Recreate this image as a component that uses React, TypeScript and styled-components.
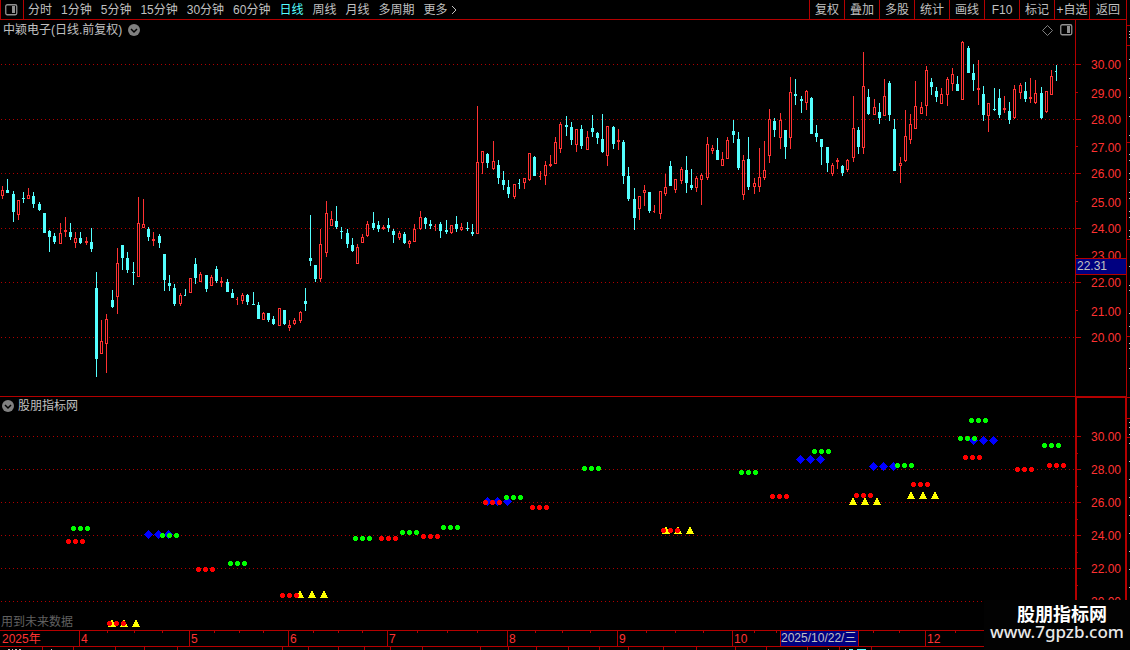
import React from "react";
import styled, { createGlobalStyle } from "styled-components";

const UI_FONT = '"Liberation Sans", "Noto Sans CJK SC", sans-serif';
const LINE = "#b40000";
const UP = "#ff3232";
const DOWN = "#54ffff";
const TEXT = "#c0c0c0";

const GlobalStyle = createGlobalStyle`
  * { box-sizing: border-box; }
  html, body { margin: 0; background: #000; }
  body { font-family: ${UI_FONT}; font-size: 12px; color: ${TEXT}; }
  svg { display: block; }
`;

const Page = styled.div`
  position: relative;
  display: flex;
  background: #000;
  overflow: hidden;
`;

const Main = styled.main`
  flex: 1;
  min-width: 0;
  display: flex;
  flex-direction: column;
`;

const Toolbar = styled.header`
  display: flex;
  justify-content: space-between;
  height: 20px;
  border-bottom: 1px solid ${LINE};
`;

const Group = styled.nav`
  display: flex;
`;

const ToolButton = styled.button`
  padding: 2px 0 0;
  border: 0;
  background: none;
  color: ${TEXT};
  font: 12px/17px ${UI_FONT};
  white-space: nowrap;
  cursor: pointer;
`;

const PanelToggle = styled(ToolButton)`
  width: 24px;
  margin-right: 4px;
  padding: 0 0 0 4px;
  border: solid ${LINE};
  border-width: 0 1px;
`;

const PeriodButton = styled(ToolButton)<{ $active?: boolean }>`
  margin-right: 9px;
  color: ${(p) => (p.$active ? DOWN : TEXT)};
`;

const MoreButton = styled(PeriodButton)`
  display: flex;
  align-items: center;
  gap: 3px;
`;

const ActionButton = styled(ToolButton)<{ $wide?: boolean }>`
  width: ${(p) => (p.$wide ? 37 : 35)}px;
  border-left: 1px solid ${LINE};
`;

const Pane = styled.section`
  display: flex;
`;

const PlotArea = styled.div<{ $divided?: boolean }>`
  position: relative;
  flex: 1;
  min-width: 0;
  border-top: ${(p) => (p.$divided ? `1px solid ${LINE}` : "0")};
`;

const Axis = styled.div<{ $selected?: boolean }>`
  flex: none;
  width: 51px;
  border: solid ${LINE};
  border-width: ${(p) => (p.$selected ? "2px 1px 0 2px" : "0 0 0 1px")};
`;

const Caption = styled.div<{ $main?: boolean }>`
  position: absolute;
  top: 0;
  left: ${(p) => (p.$main ? 3 : 2)}px;
  display: flex;
  align-items: center;
  gap: ${(p) => (p.$main ? 6 : 4)}px;
  height: ${(p) => (p.$main ? 20 : 18)}px;
  line-height: 18px;
`;

const CornerTools = styled.div`
  position: absolute;
  top: 4px;
  right: 2px;
  display: flex;
  gap: 7px;
`;

const IconButton = styled.button`
  display: block;
  padding: 0;
  border: 0;
  background: none;
  cursor: pointer;
`;

const Note = styled.div`
  position: absolute;
  left: 1px;
  bottom: 0;
  line-height: 16px;
  color: #606060;
`;

const TimeAxis = styled.footer`
  border-top: 1px solid ${LINE};
`;

const NextPane = styled.div`
  border-top: 1px solid ${LINE};
`;

const SideStrip = styled.aside`
  flex: none;
  width: 4px;
  border-left: 1px solid ${LINE};
`;

const Watermark = styled.div`
  position: absolute;
  right: 0;
  bottom: 0;
  width: 146px;
  height: 50px;
  padding-top: 3px;
  background: #020202;
  color: #fff;
  text-align: center;
`;

const WatermarkName = styled.div`
  padding-left: 10px;
  font: bold 18px/20px "Noto Sans CJK SC", sans-serif;
`;

const WatermarkSite = styled.div`
  font: 500 17px/18px "Noto Sans", sans-serif;
  color: #e8e8e8;
`;

/* x, high, body top, body bottom, low, direction (1 up, 0 down), narrow body */
type Candle = [number, number, number, number, number, number, number?];

const candles: Candle[] = [
  [2,186,190,196,199,1],[7,179,190,193,193,0],[13,191,194,212,222,0],[18,200,200,215,220,1],
  [23,192,198,199,203,0],[28,188,195,199,199,1],[33,192,196,204,208,0],[39,202,204,210,211,0],
  [44,213,213,233,233,0],[49,230,231,237,252,0],[54,233,236,242,244,0],[60,223,233,244,244,1],
  [65,217,230,232,237,1],[70,223,232,237,240,0],[75,232,238,243,248,1],[80,232,238,243,244,0],
  [86,237,241,243,245,1],[91,228,242,249,252,0],[96,272,288,359,377,0],[101,320,341,354,354,1],
  [106,314,319,344,373,1],[112,290,300,307,308,0],[117,248,263,297,314,1],[122,245,245,258,270,0],
  [127,252,258,270,273,0],[133,262,272,273,285,0],[138,197,223,277,277,1],[143,199,224,228,228,1],
  [148,227,229,237,241,0],[153,232,239,241,246,1],[159,234,236,243,248,0],[164,254,254,280,291,0],
  [169,275,283,286,291,0],[174,284,288,304,306,0],[180,293,295,304,306,1],[185,289,295,296,296,0,1],
  [190,278,278,293,293,1],[195,258,264,278,284,0],[200,272,274,282,282,1],[206,275,275,289,292,0],
  [211,275,277,286,286,1],[216,266,269,281,283,0],[221,277,281,283,287,1],[227,279,282,292,292,0],
  [232,289,293,298,298,0],[237,297,299,300,305,1,1],[242,293,295,301,304,1],[247,294,295,302,305,0],
  [253,292,304,305,305,0],[258,302,305,319,319,0],[263,312,313,320,320,1],[268,313,313,320,322,0],
  [273,316,319,324,325,0],[279,308,308,326,326,1],[284,310,310,324,325,0],[289,320,325,328,331,1],
  [294,318,320,324,325,1],[300,311,312,321,323,1],[305,288,301,304,311,0],[310,215,258,261,266,0],
  [315,265,265,279,282,0],[320,229,244,279,282,1],[326,201,213,253,257,1],[331,211,219,226,226,1],
  [336,206,221,227,229,0],[341,227,231,232,239,0],[347,229,233,244,248,0],[352,238,245,251,252,0],
  [357,244,247,264,264,1],[362,234,237,243,243,1],[367,221,224,236,237,1],[373,212,223,228,230,0],
  [378,221,225,229,232,0],[383,225,227,229,230,1],[388,218,225,228,232,0],[393,229,231,235,243,0],
  [399,231,233,238,240,1],[404,232,234,243,244,0],[409,240,241,244,248,1],[414,224,229,242,242,1],
  [420,211,217,229,230,1],[425,217,218,224,229,0],[430,220,224,226,229,0],[435,224,226,227,231,1,1],
  [440,222,224,231,238,0],[446,220,230,232,234,0],[451,225,225,233,234,1],[456,216,224,229,232,0],
  [461,223,227,230,231,1],[467,222,228,229,231,0],[472,224,232,234,236,0],[477,106,162,234,234,1],
  [482,151,151,163,174,1],[487,153,154,163,168,0],[493,141,161,169,170,1],[498,160,165,178,184,0],
  [503,171,180,185,190,0],[508,180,187,194,198,0],[514,184,184,197,199,1],[519,179,183,184,189,0,1],
  [524,178,178,183,189,1],[529,153,153,180,181,1],[534,156,157,176,176,0],[540,171,176,177,180,1,1],
  [545,161,165,176,185,1],[550,155,164,166,167,1],[555,137,142,164,164,1],[560,122,124,149,153,1],
  [566,116,125,127,136,0],[571,122,127,140,145,0],[576,129,129,145,152,1],[581,125,129,146,149,0],
  [587,131,137,150,150,1],[592,115,128,132,137,0],[597,132,133,138,144,0],[602,114,139,152,153,0],
  [607,126,126,156,166,1],[613,126,127,144,149,0],[618,129,140,142,150,1],[623,140,142,176,184,0],
  [628,167,176,199,201,0],[634,188,199,218,230,0],[639,196,196,209,220,1],[644,185,190,193,206,1],
  [649,192,192,211,213,0],[654,205,211,212,213,1,1],[660,191,191,214,219,1],[665,174,187,194,196,1],
  [670,161,166,186,186,0],[675,179,179,190,193,1],[681,167,169,181,184,1],[686,156,170,183,193,0],
  [691,169,185,188,190,0],[696,176,178,188,192,1],[701,173,175,180,205,1],[707,137,144,178,180,1],
  [712,145,148,151,154,1],[717,138,150,160,160,0],[722,152,159,166,166,1],[727,137,140,159,159,1],
  [733,120,131,135,143,0],[738,132,139,168,170,0],[743,155,160,195,200,1],[748,137,159,187,190,0],
  [754,178,183,187,194,1],[759,148,177,187,192,1],[764,141,170,178,180,1],[769,109,119,156,163,1],
  [774,118,121,130,137,0],[780,113,120,138,149,1],[785,130,130,147,159,0],[790,77,92,138,149,1],
  [795,79,94,96,105,0],[801,96,99,101,113,0],[806,90,91,103,110,1],[811,97,98,134,134,0],
  [816,125,133,137,142,0],[821,139,139,147,165,0],[827,147,147,163,172,0],[832,163,165,174,176,1],
  [837,158,160,162,169,1],[842,165,166,173,176,0],[847,159,160,170,172,1],[853,96,128,158,162,1],
  [858,127,130,147,154,0],[863,52,86,148,154,1],[868,89,97,114,115,0],[874,99,107,115,115,1],
  [879,103,112,118,124,0],[884,79,96,116,116,1],[889,81,83,115,121,0],[894,119,129,171,171,0],
  [900,157,163,166,183,1],[905,110,136,161,162,1],[910,114,124,140,144,1],[915,81,106,129,129,1],
  [921,102,107,114,114,1],[926,66,70,106,116,1],[931,78,82,87,95,0],[936,87,91,97,102,0],
  [941,88,94,104,104,1],[947,77,79,95,106,1],[952,68,74,84,91,1],[957,76,84,91,91,0],
  [962,41,42,100,100,1],[968,46,48,73,73,0],[973,64,73,80,91,0],[978,60,88,90,105,1],
  [983,86,94,115,121,0],[988,103,103,116,132,1],[994,88,109,110,111,0],[999,89,98,115,118,0],
  [1004,96,108,110,113,1],[1009,102,111,120,124,0],[1014,85,89,118,119,1],[1020,83,85,93,99,1],
  [1025,82,91,99,102,0],[1030,78,97,99,103,1],[1035,80,93,103,104,1],[1041,87,93,118,119,0],
  [1046,91,91,112,113,1],[1051,70,76,95,95,1],[1056,65,71,72,81,0,1],
];

const greens = [[73,528],[162,535],[230,563],[355,538],[402,532],[443,527],[506,497],[584,468],[741,472],[814,451],[897,465],[960,438],[971,420],[1044,445]];
const reds = [[68,541],[198,569],[282,595],[109,623],[381,538],[423,536],[485,502],[532,507],[663,530],[772,496],[856,495],[913,484],[965,457],[1017,469],[1049,465]];
const blues = [[148,534],[487,501],[800,459],[873,466],[973,440]];
const yellows = [[112,620],[300,591],[666,527],[853,498],[911,492]];

const DOT = "M-1 -2h3v1h1v3h-1v1h-3v-1h-1v-3h1z";
const DIAMOND = "M0 -4h1v1h1v1h1v1h1v1h1v1h-1v1h-1v1h-1v1h-1v1h-1v-1h-1v-1h-1v-1h-1v-1h-1v-1h1v-1h1v-1h1v-1h1z";
const TRIANGLE = "M0 0h1v2h1v2h1v2h1v1h-8v-1h1v-2h1v-2h1v-2z";

const Marks = ({ groups, pitch, shape, color }: { groups: number[][]; pitch: number; shape: string; color: string }) => (
  <g fill={color}>
    {groups.flatMap(([x, y]) =>
      [0, 1, 2].map((i) => <path key={`${x}-${y}-${i}`} d={shape} transform={`translate(${x + i * pitch} ${y})`} />)
    )}
  </g>
);

const GridLines = ({ rows }: { rows: number[] }) => (
  <g stroke="#b00000" strokeDasharray="1 3">
    {rows.map((y) => (
      <line key={y} x1="1" x2="100%" y1={y + 0.5} y2={y + 0.5} />
    ))}
  </g>
);

const ToggleGlyph = () => (
  <svg width="12" height="12" viewBox="0 0 12 12" aria-hidden="true">
    <circle cx="6" cy="6" r="6" fill="#808080" />
    <path d="M3 5l3 3 3-3" fill="none" stroke="#000" strokeWidth="1.5" />
  </svg>
);

const PanelGlyph = ({ color }: { color: string }) => (
  <svg width="13" height="12" viewBox="0 0 13 12" aria-hidden="true">
    <rect x="0.75" y="0.75" width="11" height="10" rx="1.5" fill="none" stroke={color} strokeWidth="1.3" />
    <rect x="7" y="2" width="3" height="7" fill={color} />
  </svg>
);

const priceTicks = [64, 92, 119, 146, 173, 201, 228, 255, 282, 310, 337];
const priceLabels = [65, 94, 120, 148, 174, 203, 229, 256, 283, 312, 338];
const valueTicks = [436, 469, 502, 535, 568, 601];

const months: [number, string][] = [[79,"4"],[189,"5"],[288,"6"],[387,"7"],[507,"8"],[617,"9"],[732,"10"],[925,"12"]];
const weeks = [107,134,162,214,239,263,313,338,362,417,447,477,535,562,590,646,675,703,754,776,873,899,955];
const lowerTicks = [42,73,115,144,177,282,308,338,364,390,422,480,508,536,568,599,628,663,696,735,766,807,839,871];
const periods = ["分时", "1分钟", "5分钟", "15分钟", "30分钟", "60分钟", "日线", "周线", "月线", "多周期"];
const actions = ["复权", "叠加", "多股", "统计", "画线", "F10", "标记", "+自选", "返回"];
const sideReds = [25, 45, 142, 239, 336, 397, 418, 437];
const sideWhites = [31,34,37,59,78,97,116,135,154,160,173,179,192,198,211,217,230,236,266,285,290,313,326,343,348,368,422,427,434,443,461,479,497,515,533,551,569,587];

export default function App() {
  return (
    <Page>
      <GlobalStyle />
      <Main>
        <Toolbar>
          <Group>
            <PanelToggle aria-label="面板"><PanelGlyph color="#909090" /></PanelToggle>
            {periods.map((p) => (
              <PeriodButton key={p} $active={p === "日线"}>{p}</PeriodButton>
            ))}
            <MoreButton>
              更多
              <svg width="6" height="10" viewBox="0 0 6 10" aria-hidden="true">
                <path d="M1 0l4 4-4 4" fill="none" stroke={TEXT} />
              </svg>
            </MoreButton>
          </Group>
          <Group>
            {actions.map((a) => (
              <ActionButton key={a} $wide={a === "返回"}>{a}</ActionButton>
            ))}
          </Group>
        </Toolbar>

        <Pane>
          <PlotArea>
            <svg width="100%" height="376" shapeRendering="crispEdges">
              <g transform="translate(0 -20)">
                <GridLines rows={priceTicks.filter((_, i) => i % 2 === 0)} />
                {candles.map(([x, high, top, bottom, low, up, narrow]) => (
                  <g key={x} fill={up ? UP : DOWN}>
                    <rect x={x} y={high} width="1" height={low - high} />
                    <rect x={x - 1} y={top} width={narrow ? 2 : 3} height={bottom - top} />
                    {up === 1 && bottom - top > 2 && (
                      <rect x={x} y={top + 1} width="1" height={bottom - top - 2} fill="#000" />
                    )}
                  </g>
                ))}
              </g>
            </svg>
            <Caption $main>
              <span>中颖电子(日线.前复权)</span>
              <IconButton aria-label="展开"><ToggleGlyph /></IconButton>
            </Caption>
            <CornerTools>
              <IconButton aria-label="标记点">
                <svg width="11" height="11" viewBox="0 0 11 11" aria-hidden="true">
                  <path d="M5.500 0.500l5 5-5 5-5-5z" fill="none" stroke="#808080" />
                </svg>
              </IconButton>
              <IconButton aria-label="侧栏"><PanelGlyph color="#909090" /></IconButton>
            </CornerTools>
          </PlotArea>
          <Axis>
            <svg width="50" height="376">
              <g transform="translate(0 -20)" fill={UP} fontSize="12">
                {priceTicks.map((y, i) => (
                  <React.Fragment key={y}>
                    <rect x="0" y={y} width={i % 2 ? 2 : 5} height="1" fill={LINE} />
                    <text x="45" y={priceLabels[i] + 4} textAnchor="end">{`${30 - i}.00`}</text>
                  </React.Fragment>
                ))}
                <rect x="0" y="258" width="50" height="17" fill={LINE} />
                <rect x="0" y="259" width="50" height="15" fill="#000080" />
                <text x="1" y="270" fill={TEXT}>22.31</text>
              </g>
            </svg>
          </Axis>
        </Pane>

        <Pane>
          <PlotArea $divided>
            <svg width="100%" height="233" shapeRendering="crispEdges">
              <g transform="translate(0 -397)">
                <GridLines rows={valueTicks} />
                <Marks groups={blues} pitch={10} shape={DIAMOND} color="#0000ff" />
                <Marks groups={yellows} pitch={12} shape={TRIANGLE} color="#ffff00" />
                <Marks groups={greens} pitch={7} shape={DOT} color="#00ff00" />
                <Marks groups={reds} pitch={7} shape={DOT} color="#ff0000" />
              </g>
            </svg>
            <Caption>
              <IconButton aria-label="展开"><ToggleGlyph /></IconButton>
              <span>股朋指标网</span>
            </Caption>
            <Note>用到未来数据</Note>
          </PlotArea>
          <Axis $selected>
            <svg width="48" height="232">
              <g transform="translate(0 -398)" fill={UP} fontSize="12">
                {valueTicks.map((y, i) => (
                  <React.Fragment key={y}>
                    <rect x="0" y={y} width="4" height="1" fill={LINE} />
                    <rect x="0" y={y + 17} width="1" height="1" fill={LINE} />
                    <text x="44" y={y + 5} textAnchor="end">{`${30 - i * 2}.00`}</text>
                  </React.Fragment>
                ))}
              </g>
            </svg>
          </Axis>
        </Pane>

        <TimeAxis>
          <svg width="100%" height="15">
            <g fill={UP} fontSize="12">
              <text x="2" y="12">2025年</text>
              {weeks.map((x) => (
                <rect key={x} x={x} y="0" width="1" height="2" fill={LINE} />
              ))}
              {months.map(([x, label]) => (
                <React.Fragment key={x}>
                  <rect x={x} y="0" width="1" height="15" fill={LINE} />
                  <text x={x + 2} y="12">{label}</text>
                </React.Fragment>
              ))}
              <rect x="780" y="0" width="79" height="15" fill={LINE} />
              <rect x="781" y="0" width="77" height="15" fill="#000080" />
              <text x="781" y="11" fill={TEXT}>2025/10/22/三</text>
            </g>
          </svg>
        </TimeAxis>
        <NextPane>
          <svg width="100%" height="3" shapeRendering="crispEdges" aria-hidden="true">
            {lowerTicks.map((x) => (
              <rect key={x} x={x} y="0" width="1" height="3" fill={LINE} />
            ))}
            <path d="M8 2h2v1h-2zM12 2h1v1h-1zM15 2h2v1h-2zM19 2h2v1h-2zM51 2h1v1h-1zM828 2h1v1h-1zM845 2h1v1h-1z" fill={TEXT} />
            <path d="M849 2h4v1h-4zM857 2h9v1h-9z" fill={DOWN} />
          </svg>
        </NextPane>
      </Main>
      <SideStrip>
        <svg width="3" height="600" shapeRendering="crispEdges" aria-hidden="true">
          {sideReds.map((y) => (
            <rect key={y} x="0" y={y} width="3" height="1" fill={LINE} />
          ))}
          {sideWhites.map((y) => (
            <rect key={y} x="2" y={y} width="1" height="1" fill={TEXT} />
          ))}
        </svg>
      </SideStrip>
      <Watermark>
        <WatermarkName>股朋指标网</WatermarkName>
        <WatermarkSite>www.7gpzb.com</WatermarkSite>
      </Watermark>
    </Page>
  );
}
